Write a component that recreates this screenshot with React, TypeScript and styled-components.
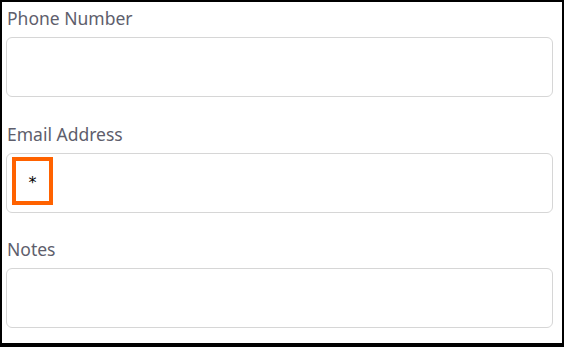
import { FC } from "react";
import { styled, createGlobalStyle } from "styled-components";

const GlobalStyle = createGlobalStyle`
  html, body {
    margin: 0;
    padding: 0;
    background: #fff;
  }
`;

const fields = [
  { label: "Phone Number", marked: false },
  { label: "Email Address", marked: true },
  { label: "Notes", marked: false },
];

const App: FC = () => {
  return (
    <>
      <GlobalStyle />
      <Frame>
        {fields.map((f) => (
          <Field key={f.label}>
            <Label>{f.label}</Label>
            <InputBox>
              {f.marked && (
                <Marker>
                  <Star>*</Star>
                </Marker>
              )}
            </InputBox>
          </Field>
        ))}
      </Frame>
    </>
  );
};

const Frame = styled.div`
  box-sizing: border-box;
  width: 564px;
  height: 347px;
  border: 2px solid #000;
  border-bottom-width: 4px;
  padding: 4px 9px 0 4px;
  display: flex;
  flex-direction: column;
  gap: 24.5px;
  font-family: "Noto Sans", sans-serif;
`;

const Field = styled.div`
  display: flex;
  flex-direction: column;
  gap: 7px;
`;

const Label = styled.div`
  font-size: 17.5px;
  line-height: 24px;
  color: #5e5e6c;
  padding-left: 1px;
`;

const InputBox = styled.div`
  position: relative;
  box-sizing: border-box;
  height: 60px;
  border: 1px solid #d6d6d6;
  border-radius: 6px;
  background: #fff;
`;

const Marker = styled.div`
  position: absolute;
  left: 5px;
  top: 3px;
  box-sizing: border-box;
  width: 41px;
  height: 48px;
  border: 4px solid #ff6200;
  display: flex;
  align-items: center;
  justify-content: center;
`;

const Star = styled.span`
  font-family: "DejaVu Sans", sans-serif;
  font-size: 16px;
  line-height: 1;
  color: #000;
  margin-top: 4px;
`;

export default App;
